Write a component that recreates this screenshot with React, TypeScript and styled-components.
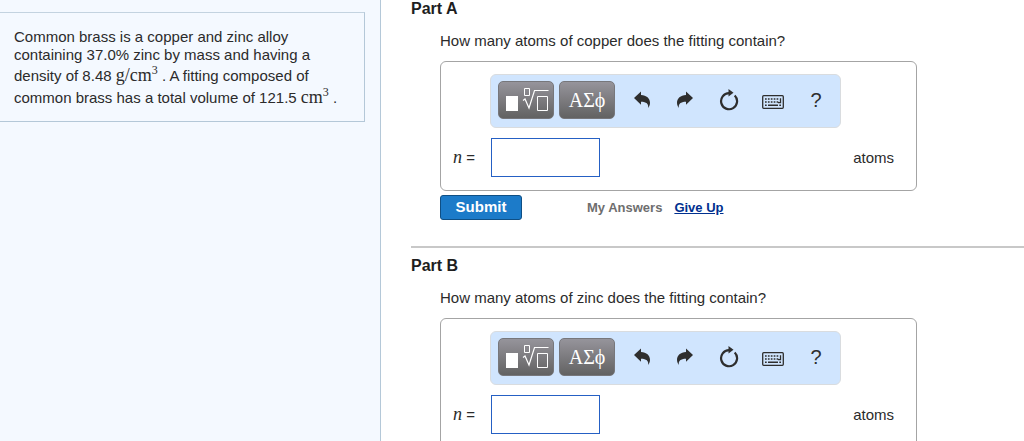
import React from "react";
import styled, { createGlobalStyle } from "styled-components";

const GlobalStyle = createGlobalStyle`
  *, *::before, *::after { box-sizing: border-box; }
  body {
    margin: 0;
    background: #fff;
    color: #2b2b2b;
    font: 15px/18px "Liberation Sans", Arial, sans-serif;
  }
  p, h2 { margin: 0; }
`;

const Page = styled.div`
  display: flex;
  height: 100vh;
  overflow: hidden;
`;

const Sidebar = styled.aside`
  flex: 0 0 381px;
  padding: 12px 15px 0 0;
  background: #f4f9ff;
  border-right: 1px solid #b4c8d8;
`;

const Problem = styled.p`
  padding: 15px 16px 13px 14px;
  border: 1px solid #b4c8d8;
  border-top-color: #c3d3e0;
  border-left: 0;
`;

const Unit = styled.span`
  display: inline-block;
  font: 18px/22px "Liberation Serif", "Times New Roman", serif;

  sup {
    font-size: 12px;
    line-height: 0;
    vertical-align: 7px;
  }
`;

const Main = styled.main`
  flex: 1;
  min-width: 0;
  padding-left: 30px;
`;

const PartSection = styled.section`
  & + & {
    margin-top: 26px;
    padding-top: 9px;
    border-top: 2px solid #c8c8c8;
  }
`;

const PartTitle = styled.h2`
  font-size: 16px;
  line-height: 18px;
  font-weight: bold;
  color: #1e1e1e;
`;

const PartBody = styled.div`
  padding: 14px 0 0 29px;
`;

const AnswerPanel = styled.div`
  max-width: 477px;
  margin-top: 11px;
  padding: 12px 22px 13px 12px;
  border: 1px solid #a4a4a4;
  border-radius: 6px;
`;

const Toolbar = styled.div`
  display: flex;
  align-items: center;
  width: 351px;
  height: 54px;
  margin-left: 37px;
  padding: 0 2px 2px 7px;
  background: #d0e5fe;
  border: 1px solid #d9dcdf;
  border-radius: 6px;
`;

const PaletteButton = styled.button`
  display: grid;
  place-items: center;
  width: 56px;
  height: 38px;
  margin-right: 5px;
  padding: 0;
  border: 1px solid #77777b;
  border-radius: 5px;
  background: linear-gradient(#96949b, #626262);
  color: #fff;
  font: 20px/22px "Liberation Serif", "Times New Roman", serif;
`;

const ToolButton = styled.button`
  display: grid;
  place-items: center;
  flex: 1;
  height: 38px;
  padding: 0;
  border: 0;
  background: none;
  color: #2e2e2e;
  font: 20px/24px "Liberation Sans", Arial, sans-serif;
`;

const AnswerRow = styled.div`
  display: flex;
  align-items: center;
  margin-top: 10px;
`;

const AnswerLabel = styled.label`
  width: 38px;

  i {
    font: italic 18px/18px "Liberation Serif", "Times New Roman", serif;
  }
`;

const AnswerInput = styled.input`
  width: 109px;
  height: 39px;
  padding: 0 6px;
  border: 1px solid #2560c4;
  background: #fff;
  font: inherit;
`;

const AnswerUnit = styled.span`
  margin-left: auto;
`;

const Actions = styled.div`
  display: flex;
  align-items: center;
  margin-top: 4px;
  font-size: 13px;
  font-weight: bold;
`;

const SubmitButton = styled.button`
  width: 82px;
  height: 25px;
  padding: 0 0 1px;
  border: 1px solid #0f4f84;
  border-radius: 3px;
  background: #1c7bc9;
  color: #fff;
  font: bold 15px/18px "Liberation Sans", Arial, sans-serif;
`;

const MyAnswers = styled.span`
  margin: 0 12px 0 65px;
  color: #6e6e6e;
`;

const GiveUp = styled.a`
  color: #00308f;
`;

const TemplateIcon = () => (
  <svg width="46" height="28" viewBox="0 0 46 28" fill="none" stroke="#fff" aria-hidden="true">
    <path d="M3 10h12v15H3z" fill="#fff" stroke="none" />
    <path d="M21.500 2.500h5v7h-5z" />
    <path d="M20 14.500l2-1.500 4 9 5.500-17.500h14" strokeWidth="1.200" />
    <path d="M34.500 10.500h10v14h-10z" />
  </svg>
);

const ArrowIcon = ({ forward = false }: { forward?: boolean }) => (
  <svg width="18" height="20" viewBox="0 0 18 20" aria-hidden="true">
    <path
      d="M1 8 8 1.500V5c5.500.3 9 3.300 9 7.800 0 2-.7 3.900-1.800 5.200.5-4-1.700-6.200-7.200-6.200v3z"
      fill="currentColor"
      transform={forward ? "matrix(-1 0 0 1 18 0)" : undefined}
    />
  </svg>
);

const ResetIcon = () => (
  <svg width="20" height="22" viewBox="0 0 20 22" aria-hidden="true">
    <path d="M15.700 6.500A8 8 0 1 1 10 4.200" fill="none" stroke="currentColor" strokeWidth="2.200" />
    <path d="M9.500 0 14.500 3.800 9.500 7.500z" fill="currentColor" />
  </svg>
);

const KeyboardIcon = () => (
  <svg width="22" height="20" viewBox="0 0 22 20" fill="none" stroke="currentColor" aria-hidden="true">
    <rect x="0.700" y="5.700" width="20.600" height="12.600" rx="1" strokeWidth="1.300" />
    <path d="M3 9h14.500M3 12h13.500" strokeWidth="1.500" strokeDasharray="1.700 1.200" />
    <path d="M3 15.300h1.700m1.300 0h10m1.300 0H19" strokeWidth="1.500" />
    <path d="M18.500 8.200v4.500h-2.500" strokeWidth="1.300" />
  </svg>
);

type PartProps = {
  name: string;
  question: string;
  children?: React.ReactNode;
};

function Part({ name, question, children }: PartProps) {
  const id = `answer-${name}`;
  return (
    <PartSection>
      <PartTitle>Part {name}</PartTitle>
      <PartBody>
        <p>{question}</p>
        <AnswerPanel>
          <Toolbar role="toolbar" aria-label="Answer tools">
            <PaletteButton type="button" aria-label="Templates">
              <TemplateIcon />
            </PaletteButton>
            <PaletteButton type="button">ΑΣϕ</PaletteButton>
            <ToolButton type="button" aria-label="Undo">
              <ArrowIcon />
            </ToolButton>
            <ToolButton type="button" aria-label="Redo">
              <ArrowIcon forward />
            </ToolButton>
            <ToolButton type="button" aria-label="Reset">
              <ResetIcon />
            </ToolButton>
            <ToolButton type="button" aria-label="Keyboard shortcuts">
              <KeyboardIcon />
            </ToolButton>
            <ToolButton type="button">?</ToolButton>
          </Toolbar>
          <AnswerRow>
            <AnswerLabel htmlFor={id}>
              <i>n</i> =
            </AnswerLabel>
            <AnswerInput id={id} type="text" />
            <AnswerUnit>atoms</AnswerUnit>
          </AnswerRow>
        </AnswerPanel>
        {children}
      </PartBody>
    </PartSection>
  );
}

export default function App() {
  return (
    <>
      <GlobalStyle />
      <Page>
        <Sidebar>
          <Problem>
            Common brass is a copper and zinc alloy containing 37.0% zinc by mass and having a
            density of 8.48 <Unit>g/cm<sup>3</sup></Unit> . A fitting composed of common brass has
            a total volume of 121.5 <Unit>cm<sup>3</sup></Unit> .
          </Problem>
        </Sidebar>
        <Main>
          <Part name="A" question="How many atoms of copper does the fitting contain?">
            <Actions>
              <SubmitButton type="button">Submit</SubmitButton>
              <MyAnswers>My Answers</MyAnswers>
              <GiveUp href="#give-up">Give Up</GiveUp>
            </Actions>
          </Part>
          <Part name="B" question="How many atoms of zinc does the fitting contain?" />
        </Main>
      </Page>
    </>
  );
}
